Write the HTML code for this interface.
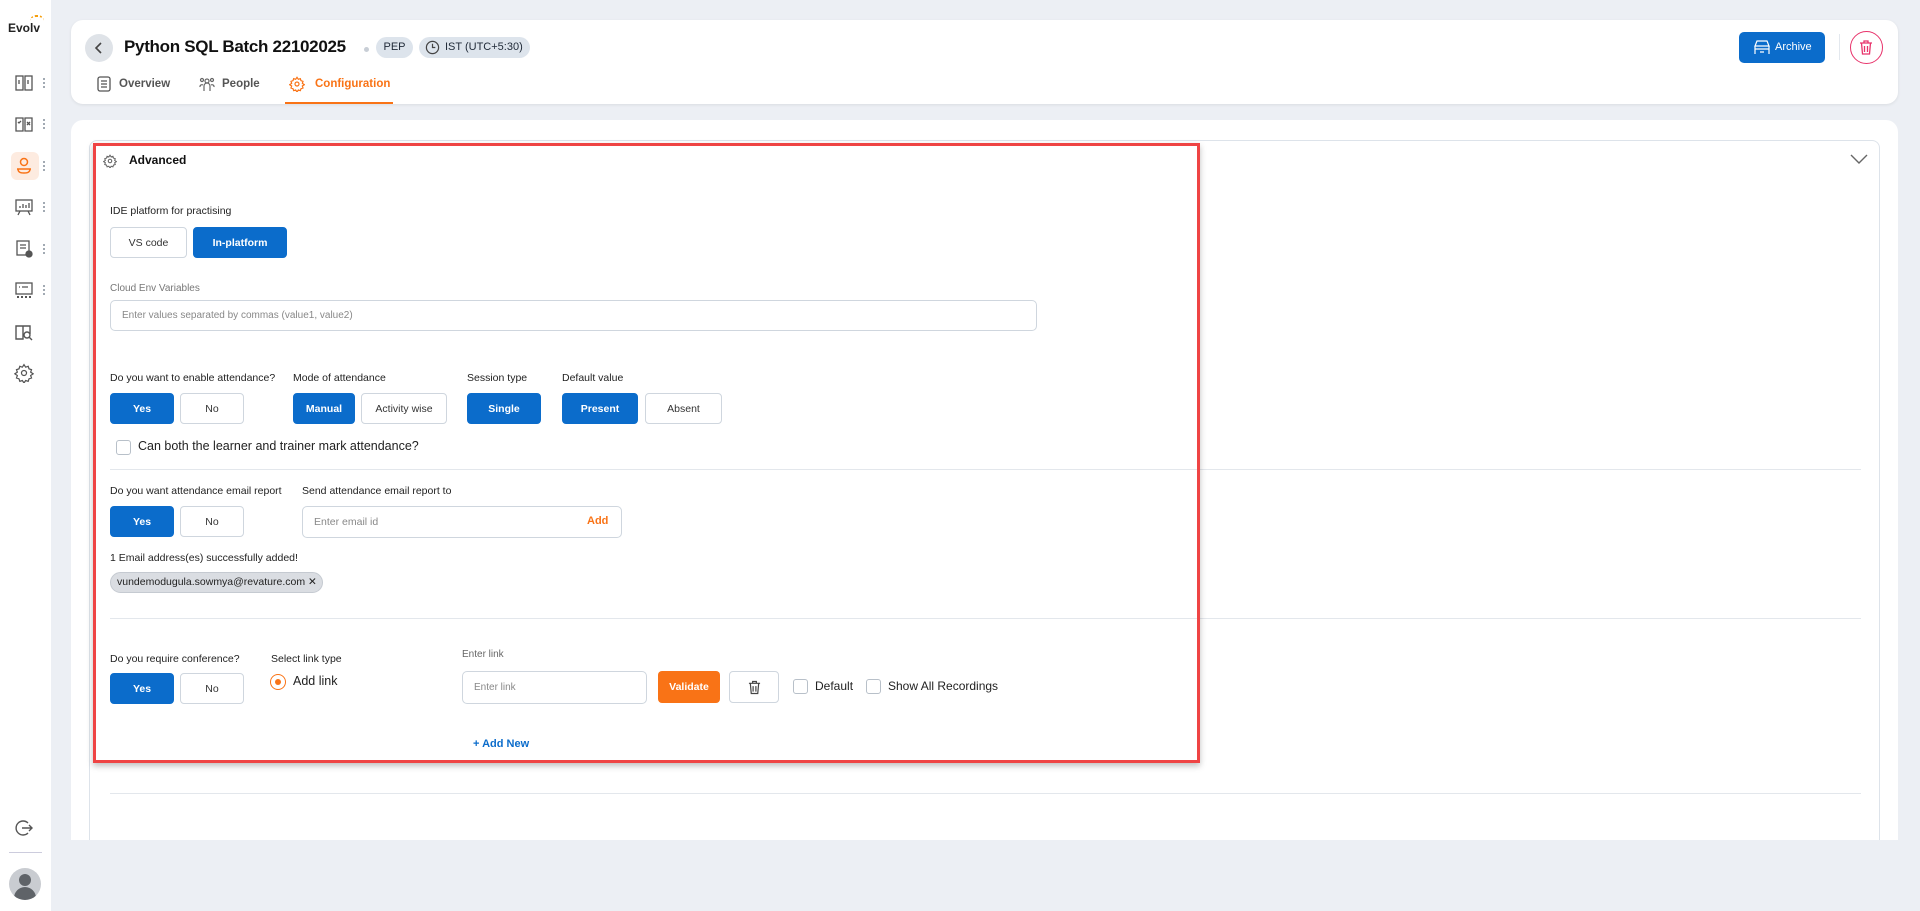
<!DOCTYPE html>
<html><head><meta charset="utf-8"><style>
*{box-sizing:border-box;margin:0;padding:0}
body{width:1920px;height:911px;background:#eceff4;font-family:"Liberation Sans",sans-serif;color:#1f2937;position:relative;overflow:hidden}
.a{position:absolute;white-space:nowrap}
.side{left:0;top:0;width:51px;height:911px;background:#fff}
.ic{position:absolute;left:14px;width:20px;height:20px}
.dots{position:absolute;left:43px;width:2px;height:12px;background:radial-gradient(circle,#9aa3ad 1px,transparent 1.2px) 0 0/2px 4px}
.card{background:#fff;border-radius:12px}
.lbl{position:absolute;font-size:10.5px;color:#222;white-space:nowrap}
.btn{position:absolute;height:31px;border:1px solid #cfd6de;border-radius:4px;background:#fff;font-size:10.5px;display:flex;align-items:center;justify-content:center;color:#333}
.btn.on{background:#0b6ccb;border-color:#0b6ccb;color:#fff;font-weight:bold}
.inp{position:absolute;border:1px solid #cfd6de;border-radius:5px;background:#fff;font-size:10.5px;color:#888;display:flex;align-items:center;padding-left:11px}
.cb{position:absolute;width:15px;height:15px;border:1px solid #b8c0c9;border-radius:3px;background:#fff}
.hr{position:absolute;left:110px;width:1751px;height:1px;background:#e3e7ec}
</style></head><body>
<div class="a side">
 <div class="a" style="left:8px;top:21px;font-size:12px;font-weight:bold;color:#222">Evolv</div>
 <div class="a" style="left:30px;top:15px;width:14px;height:6px;border-top:2px dotted #f59e0b;border-radius:8px 8px 0 0"></div>
 <svg class="ic" style="top:73px" viewBox="0 0 20 20" fill="none" stroke="#555" stroke-width="1.3"><rect x="2" y="3" width="7" height="14"/><rect x="11" y="3" width="7" height="14"/><path d="M5 7v4M14 7v4"/></svg><div class="dots" style="top:77px"></div>
 <svg class="ic" style="top:114px" viewBox="0 0 20 20" fill="none" stroke="#555" stroke-width="1.3"><path d="M2 4h7v13H2zM11 4h7v13h-7z"/><path d="M4 8l1 1 2-2M13 8l3 3M16 8l-3 3"/></svg><div class="dots" style="top:118px"></div>
 <div class="a" style="left:11px;top:152px;width:28px;height:28px;background:#fdebe0;border-radius:6px"></div>
 <svg class="ic" style="top:156px" viewBox="0 0 20 20" fill="none" stroke="#f97316" stroke-width="1.5"><circle cx="10" cy="6" r="3.5"/><path d="M3 13h14M4 13c0 3 2 4 6 4s6-1 6-4"/></svg><div class="dots" style="top:160px"></div>
 <svg class="ic" style="top:197px" viewBox="0 0 20 20" fill="none" stroke="#555" stroke-width="1.3"><rect x="2" y="3" width="16" height="11"/><path d="M6 11V9M9 11V7M12 11V8M15 11V6M6 14l-2 4M14 14l2 4"/></svg><div class="dots" style="top:201px"></div>
 <svg class="ic" style="top:239px" viewBox="0 0 20 20" fill="none" stroke="#555" stroke-width="1.3"><rect x="3" y="2" width="12" height="14"/><path d="M6 6h6M6 9h6"/><circle cx="15" cy="15" r="3" fill="#555"/></svg><div class="dots" style="top:243px"></div>
 <svg class="ic" style="top:280px" viewBox="0 0 20 20" fill="none" stroke="#555" stroke-width="1.3"><rect x="2" y="3" width="16" height="11"/><path d="M5 7h1M8 7h6"/><path d="M3 17h2M7 17h2M11 17h2M15 17h2" stroke-width="2"/></svg><div class="dots" style="top:284px"></div>
 <svg class="ic" style="top:322px" viewBox="0 0 20 20" fill="none" stroke="#555" stroke-width="1.4"><path d="M2 4h7v13H2zM9 4h7v8"/><circle cx="13" cy="13" r="3"/><path d="M15 15l3 3"/></svg>
 <svg class="ic" style="top:363px" viewBox="0 0 24 24" fill="none" stroke="#555" stroke-width="1.5"><circle cx="12" cy="12" r="3"/><path d="M12 2l2 3 3-1 1 3 3 1-1 3 3 2-3 2 1 3-3 1-1 3-3-1-2 3-2-3-3 1-1-3-3-1 1-3-3-2 3-2-1-3 3-1 1-3 3 1z"/></svg>
 <svg class="ic" style="top:818px" viewBox="0 0 20 20" fill="none" stroke="#555" stroke-width="1.4"><path d="M14 5a7 7 0 1 0 0 10"/><path d="M8 10h10M15 7l3 3-3 3"/></svg>
 <div class="a" style="left:9px;top:852px;width:33px;height:1px;background:#ccd"></div>
 <div class="a" style="left:9px;top:868px;width:32px;height:32px;border-radius:50%;background:#c9ccd1;overflow:hidden"><div class="a" style="left:10px;top:6px;width:12px;height:12px;border-radius:50%;background:#5f6368"></div><div class="a" style="left:5px;top:19px;width:22px;height:16px;border-radius:11px 11px 0 0;background:#5f6368"></div></div>
</div>

<div class="a card" style="left:71px;top:20px;width:1827px;height:84px;box-shadow:0 1px 3px rgba(0,0,0,.08)">
 <div class="a" style="left:14px;top:14px;width:28px;height:28px;border-radius:50%;background:#dfe3e8"></div>
 <svg class="a" style="left:22px;top:20px" width="12" height="16" viewBox="0 0 12 16" fill="none" stroke="#444" stroke-width="1.6"><path d="M8 3L3 8l5 5"/></svg>
 <div class="a" style="left:53px;top:17px;font-size:17px;font-weight:bold;color:#111;letter-spacing:-0.3px">Python SQL Batch 22102025</div>
 <div class="a" style="left:293px;top:27px;width:5px;height:5px;border-radius:50%;background:#c8ced6"></div>
 <div class="a" style="left:305px;top:17px;width:37px;height:21px;border-radius:11px;background:#dde4ec;font-size:11px;line-height:21px;text-align:center">PEP</div>
 <div class="a" style="left:348px;top:17px;width:111px;height:21px;border-radius:11px;background:#dde4ec;font-size:11px;line-height:21px;padding-left:26px">IST (UTC+5:30)</div>
 <svg class="a" style="left:354px;top:20px" width="15" height="15" viewBox="0 0 16 16" fill="none" stroke="#444" stroke-width="1.3"><circle cx="8" cy="8" r="6.5"/><path d="M8 4v4h3"/></svg>
 <svg class="a" style="left:26px;top:56px" width="14" height="16" viewBox="0 0 14 16" fill="none" stroke="#555" stroke-width="1.3"><rect x="1" y="1" width="12" height="14" rx="2"/><path d="M4 5h6M4 8h6M4 11h6"/></svg>
 <div class="a" style="left:48px;top:58px;font-size:11.5px;color:#555;font-weight:bold">Overview</div>
 <svg class="a" style="left:128px;top:56px" width="16" height="16" viewBox="0 0 16 16" fill="none" stroke="#666" stroke-width="1.2"><circle cx="8" cy="5" r="2"/><circle cx="3" cy="4" r="1.5"/><circle cx="13" cy="4" r="1.5"/><path d="M5 15v-5a3 3 0 0 1 6 0v5M1 11a2 2 0 0 1 3-2M15 11a2 2 0 0 0-3-2"/></svg>
 <div class="a" style="left:151px;top:58px;font-size:11.5px;color:#555;font-weight:bold">People</div>
 <svg class="a" style="left:218px;top:56px" width="16" height="16" viewBox="0 0 24 24" fill="none" stroke="#f97316" stroke-width="1.8"><circle cx="12" cy="12" r="3"/><path d="M12 2l2 3 3-1 1 3 3 1-1 3 3 2-3 2 1 3-3 1-1 3-3-1-2 3-2-3-3 1-1-3-3-1 1-3-3-2 3-2-1-3 3-1 1-3 3 1z"/></svg>
 <div class="a" style="left:244px;top:58px;font-size:11.5px;color:#f97316;font-weight:bold">Configuration</div>
 <div class="a" style="left:214px;top:82px;width:108px;height:2px;background:#f97316"></div>
 <div class="a" style="left:1668px;top:12px;width:86px;height:31px;border-radius:5px;background:#0b6ccb;color:#fff;font-size:11px;line-height:31px;padding-left:36px">Archive</div>
 <svg class="a" style="left:1683px;top:20px" width="16" height="15" viewBox="0 0 16 15" fill="none" stroke="#fff" stroke-width="1.2"><path d="M3 1h10l2 5H1z M1 6v8M15 6v8M1 9h14M6 12h4"/></svg>
 <div class="a" style="left:1768px;top:14px;width:1px;height:26px;background:#e3e8ee"></div>
 <div class="a" style="left:1779px;top:11px;width:33px;height:33px;border-radius:50%;border:1.5px solid #e8336b"></div>
 <svg class="a" style="left:1788px;top:20px" width="14" height="15" viewBox="0 0 14 15" fill="none" stroke="#e8336b" stroke-width="1.3"><path d="M1 3h12M5 3V1h4v2M2.5 3l1 11h7l1-11M5.5 6v6M8.5 6v6"/></svg>
</div>

<div class="a card" style="left:71px;top:120px;width:1827px;height:720px;border-radius:12px 12px 0 0"></div>
<div class="a" style="left:89px;top:140px;width:1791px;height:700px;border:1px solid #dde3ea;border-bottom:none;border-radius:8px 8px 0 0"></div>
<svg class="a" style="left:1850px;top:154px" width="18" height="11" viewBox="0 0 18 11" fill="none" stroke="#666" stroke-width="1.4"><path d="M1 1l8 8 8-8"/></svg>

<div class="hr" style="top:469px"></div>
<div class="hr" style="top:618px"></div>
<div class="hr" style="top:793px"></div>
<div class="a" style="left:93px;top:143px;width:1107px;height:620px;border:3px solid #ef4444;box-shadow:0 3px 6px rgba(0,0,0,.25)"></div>
<svg class="a" style="left:103px;top:154px" width="14" height="14" viewBox="0 0 24 24" fill="none" stroke="#666" stroke-width="1.8"><circle cx="12" cy="12" r="3"/><path d="M12 2l2 3 3-1 1 3 3 1-1 3 3 2-3 2 1 3-3 1-1 3-3-1-2 3-2-3-3 1-1-3-3-1 1-3-3-2 3-2-1-3 3-1 1-3 3 1z"/></svg>
<div class="a" style="left:129px;top:153px;font-size:12px;font-weight:bold;color:#111">Advanced</div>

<div class="lbl" style="left:110px;top:205px">IDE platform for practising</div>
<div class="btn" style="left:110px;top:227px;width:77px">VS code</div>
<div class="btn on" style="left:193px;top:227px;width:94px">In-platform</div>

<div class="lbl" style="left:110px;top:283px;color:#777;font-size:10px">Cloud Env Variables</div>
<div class="inp" style="left:110px;top:300px;width:927px;height:31px;font-size:10px">Enter values separated by commas (value1, value2)</div>

<div class="lbl" style="left:110px;top:372px">Do you want to enable attendance?</div>
<div class="lbl" style="left:293px;top:372px">Mode of attendance</div>
<div class="lbl" style="left:467px;top:372px">Session type</div>
<div class="lbl" style="left:562px;top:372px">Default value</div>
<div class="btn on" style="left:110px;top:393px;width:64px">Yes</div>
<div class="btn" style="left:180px;top:393px;width:64px">No</div>
<div class="btn on" style="left:293px;top:393px;width:62px">Manual</div>
<div class="btn" style="left:361px;top:393px;width:86px">Activity wise</div>
<div class="btn on" style="left:467px;top:393px;width:74px">Single</div>
<div class="btn on" style="left:562px;top:393px;width:76px">Present</div>
<div class="btn" style="left:645px;top:393px;width:77px">Absent</div>
<div class="cb" style="left:116px;top:440px"></div>
<div class="lbl" style="left:138px;top:439px;font-size:12.5px">Can both the learner and trainer mark attendance?</div>

<div class="lbl" style="left:110px;top:485px">Do you want attendance email report</div>
<div class="lbl" style="left:302px;top:485px">Send attendance email report to</div>
<div class="btn on" style="left:110px;top:506px;width:64px">Yes</div>
<div class="btn" style="left:180px;top:506px;width:64px">No</div>
<div class="inp" style="left:302px;top:506px;width:320px;height:32px">Enter email id</div>
<div class="a" style="left:587px;top:515px;font-size:11px;font-weight:bold;color:#f97316">Add</div>
<div class="lbl" style="left:110px;top:552px">1 Email address(es) successfully added!</div>
<div class="a" style="left:110px;top:572px;width:213px;height:21px;border-radius:11px;background:#dadde2;border:1px solid #c5cad1;font-size:10.5px;line-height:19px;padding-left:6px;color:#222">vundemodugula.sowmya@revature.com ✕</div>

<div class="lbl" style="left:110px;top:653px">Do you require conference?</div>
<div class="lbl" style="left:271px;top:653px">Select link type</div>
<div class="lbl" style="left:462px;top:649px;color:#666;font-size:10px">Enter link</div>
<div class="btn on" style="left:110px;top:673px;width:64px">Yes</div>
<div class="btn" style="left:180px;top:673px;width:64px">No</div>
<div class="a" style="left:270px;top:674px;width:16px;height:16px;border-radius:50%;border:1.5px solid #f97316"></div>
<div class="a" style="left:275px;top:679px;width:6px;height:6px;border-radius:50%;background:#f97316"></div>
<div class="lbl" style="left:293px;top:674px;font-size:12.5px">Add link</div>
<div class="inp" style="left:462px;top:671px;width:185px;height:33px;font-size:10px">Enter link</div>
<div class="a" style="left:658px;top:671px;width:62px;height:32px;border-radius:4px;background:#f97316;color:#fff;font-size:10.5px;font-weight:bold;line-height:32px;text-align:center">Validate</div>
<div class="btn" style="left:729px;top:671px;width:50px;height:32px"><svg width="13" height="15" viewBox="0 0 14 15" fill="none" stroke="#444" stroke-width="1.3"><path d="M1 3h12M5 3V1h4v2M2.5 3l1 11h7l1-11M5.5 6v6M8.5 6v6"/></svg></div>
<div class="cb" style="left:793px;top:679px"></div>
<div class="lbl" style="left:815px;top:679px;font-size:12px">Default</div>
<div class="cb" style="left:866px;top:679px"></div>
<div class="lbl" style="left:888px;top:679px;font-size:12px">Show All Recordings</div>
<div class="a" style="left:473px;top:738px;font-size:11px;font-weight:bold;color:#0b6ccb">+ Add New</div>
</body></html>
